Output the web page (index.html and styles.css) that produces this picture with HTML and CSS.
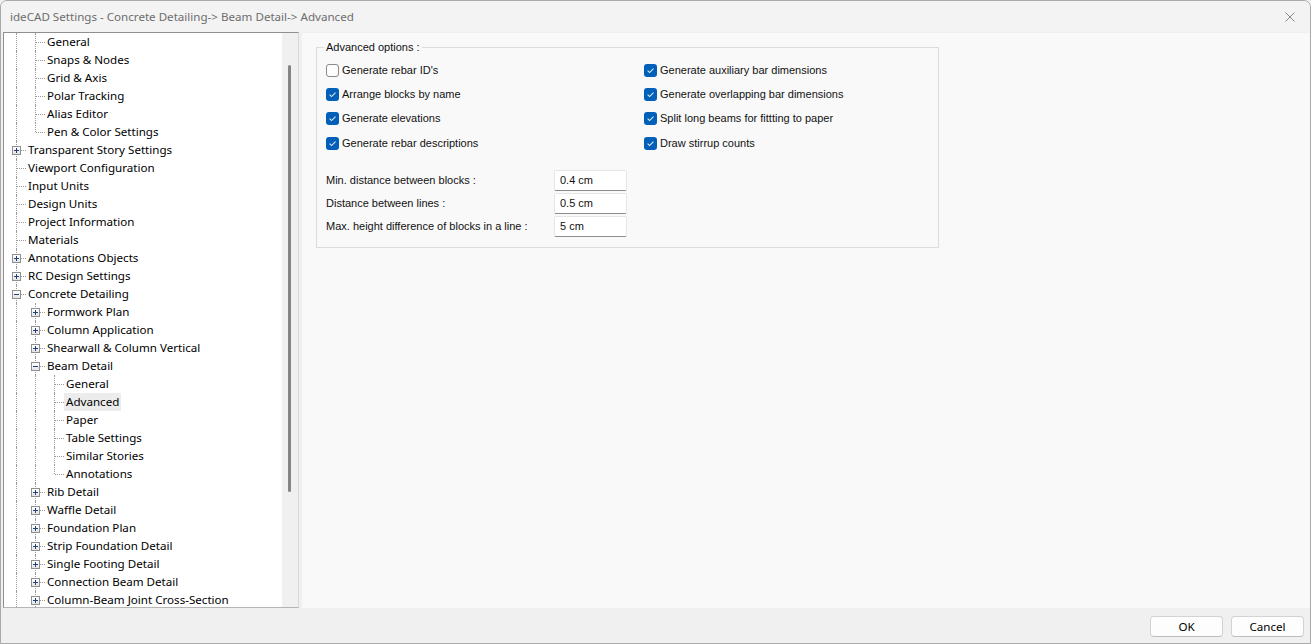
FILE: index.html
```html
<!DOCTYPE html>
<html lang="en">
<head>
    <meta charset="UTF-8">
    <title>ideCAD Settings</title>
    <link rel="stylesheet" href="styles.css">
</head>
<body>
    <div class="window">
        <!-- title bar -->
        <div class="titlebar">
            <span class="title">ideCAD Settings - Concrete Detailing-&gt; Beam Detail-&gt; Advanced</span>
            <svg class="close" width="10" height="10" viewBox="0 0 10 10">
                <path d="M0.5 0.5 L9.5 9.5 M9.5 0.5 L0.5 9.5" stroke="#8a8a8a" stroke-width="1" fill="none"/>
            </svg>
        </div>

        <div class="main">
            <!-- settings tree -->
            <div class="tree">
                <ul class="tree-list">
                    <li class="row"><i class="g line"></i><i class="g tee"></i><span class="label">General</span></li>
                    <li class="row"><i class="g line"></i><i class="g tee"></i><span class="label">Snaps &amp; Nodes</span></li>
                    <li class="row"><i class="g line"></i><i class="g tee"></i><span class="label">Grid &amp; Axis</span></li>
                    <li class="row"><i class="g line"></i><i class="g tee"></i><span class="label">Polar Tracking</span></li>
                    <li class="row"><i class="g line"></i><i class="g tee"></i><span class="label">Alias Editor</span></li>
                    <li class="row"><i class="g line"></i><i class="g corner"></i><span class="label">Pen &amp; Color Settings</span></li>
                    <li class="row"><i class="g tee"><b class="box plus"></b></i><span class="label">Transparent Story Settings</span></li>
                    <li class="row"><i class="g tee"></i><span class="label">Viewport Configuration</span></li>
                    <li class="row"><i class="g tee"></i><span class="label">Input Units</span></li>
                    <li class="row"><i class="g tee"></i><span class="label">Design Units</span></li>
                    <li class="row"><i class="g tee"></i><span class="label">Project Information</span></li>
                    <li class="row"><i class="g tee"></i><span class="label">Materials</span></li>
                    <li class="row"><i class="g tee"><b class="box plus"></b></i><span class="label">Annotations Objects</span></li>
                    <li class="row"><i class="g tee"><b class="box plus"></b></i><span class="label">RC Design Settings</span></li>
                    <li class="row"><i class="g tee"><b class="box"></b></i><span class="label">Concrete Detailing</span></li>
                    <li class="row"><i class="g line"></i><i class="g tee"><b class="box plus"></b></i><span class="label">Formwork Plan</span></li>
                    <li class="row"><i class="g line"></i><i class="g tee"><b class="box plus"></b></i><span class="label">Column Application</span></li>
                    <li class="row"><i class="g line"></i><i class="g tee"><b class="box plus"></b></i><span class="label">Shearwall &amp; Column Vertical</span></li>
                    <li class="row"><i class="g line"></i><i class="g tee"><b class="box"></b></i><span class="label">Beam Detail</span></li>
                    <li class="row"><i class="g line"></i><i class="g line"></i><i class="g tee"></i><span class="label">General</span></li>
                    <li class="row"><i class="g line"></i><i class="g line"></i><i class="g tee"></i><span class="label selected">Advanced</span></li>
                    <li class="row"><i class="g line"></i><i class="g line"></i><i class="g tee"></i><span class="label">Paper</span></li>
                    <li class="row"><i class="g line"></i><i class="g line"></i><i class="g tee"></i><span class="label">Table Settings</span></li>
                    <li class="row"><i class="g line"></i><i class="g line"></i><i class="g tee"></i><span class="label">Similar Stories</span></li>
                    <li class="row"><i class="g line"></i><i class="g line"></i><i class="g corner"></i><span class="label">Annotations</span></li>
                    <li class="row"><i class="g line"></i><i class="g tee"><b class="box plus"></b></i><span class="label">Rib Detail</span></li>
                    <li class="row"><i class="g line"></i><i class="g tee"><b class="box plus"></b></i><span class="label">Waffle Detail</span></li>
                    <li class="row"><i class="g line"></i><i class="g tee"><b class="box plus"></b></i><span class="label">Foundation Plan</span></li>
                    <li class="row"><i class="g line"></i><i class="g tee"><b class="box plus"></b></i><span class="label">Strip Foundation Detail</span></li>
                    <li class="row"><i class="g line"></i><i class="g tee"><b class="box plus"></b></i><span class="label">Single Footing Detail</span></li>
                    <li class="row"><i class="g line"></i><i class="g tee"><b class="box plus"></b></i><span class="label">Connection Beam Detail</span></li>
                    <li class="row"><i class="g line"></i><i class="g tee"><b class="box plus"></b></i><span class="label">Column-Beam Joint Cross-Section</span></li>
                </ul>
                <div class="scrollbar"><div class="thumb"></div></div>
            </div>

            <!-- options page -->
            <div class="page">
                <div class="group">
                    <span class="legend">Advanced options :</span>
                    <div class="checks">
                        <label class="check"><span class="cb"></span>Generate rebar ID's</label>
                        <label class="check"><span class="cb on"><svg viewBox="0 0 13 13"><path d="M3.6 6.7 L5.6 8.6 L9.5 4.6"/></svg></span>Generate auxiliary bar dimensions</label>
                        <label class="check"><span class="cb on"><svg viewBox="0 0 13 13"><path d="M3.6 6.7 L5.6 8.6 L9.5 4.6"/></svg></span>Arrange blocks by name</label>
                        <label class="check"><span class="cb on"><svg viewBox="0 0 13 13"><path d="M3.6 6.7 L5.6 8.6 L9.5 4.6"/></svg></span>Generate overlapping bar dimensions</label>
                        <label class="check"><span class="cb on"><svg viewBox="0 0 13 13"><path d="M3.6 6.7 L5.6 8.6 L9.5 4.6"/></svg></span>Generate elevations</label>
                        <label class="check"><span class="cb on"><svg viewBox="0 0 13 13"><path d="M3.6 6.7 L5.6 8.6 L9.5 4.6"/></svg></span>Split long beams for fittting to paper</label>
                        <label class="check"><span class="cb on"><svg viewBox="0 0 13 13"><path d="M3.6 6.7 L5.6 8.6 L9.5 4.6"/></svg></span>Generate rebar descriptions</label>
                        <label class="check"><span class="cb on"><svg viewBox="0 0 13 13"><path d="M3.6 6.7 L5.6 8.6 L9.5 4.6"/></svg></span>Draw stirrup counts</label>
                    </div>
                    <div class="fields">
                        <div class="field"><span class="field-label">Min. distance between blocks :</span><span class="input">0.4 cm</span></div>
                        <div class="field"><span class="field-label">Distance between lines :</span><span class="input">0.5 cm</span></div>
                        <div class="field"><span class="field-label">Max. height difference of blocks in a line :</span><span class="input">5 cm</span></div>
                    </div>
                </div>
            </div>
        </div>

        <!-- buttons -->
        <div class="footer">
            <button class="btn">OK</button>
            <button class="btn">Cancel</button>
        </div>
    </div>
</body>
</html>
```

FILE: styles.css
```css
* {
    margin: 0;
    padding: 0;
    box-sizing: border-box;
}
html, body {
    width: 1311px;
    height: 644px;
    overflow: hidden;
    background: #f0f0f0;
}
body {
    font-family: "Noto Sans", "Open Sans", sans-serif;
    font-size: 11.6px;
    color: #000;
}
ul {
    list-style: none;
}
.window {
    width: 1311px;
    height: 644px;
    border: 1px solid #a9a9a9;
    border-radius: 7px 7px 0 0;
    background: #f0f0f0;
    display: flex;
    flex-direction: column;
    overflow: hidden;
}
.titlebar {
    height: 31px;
    flex: none;
    display: flex;
    align-items: center;
    justify-content: space-between;
    padding: 0 10px 0 9px;
    background: #f3f3f3;
}
.title {
    color: #6d6d6d;
}
.close {
    margin-right: 5px;
}
.main {
    flex: 1;
    display: flex;
    gap: 3px;
    padding-left: 2px;
    min-height: 0;
}

/* tree */
.tree {
    width: 296px;
    flex: none;
    display: flex;
    background: #fff;
    border: 1px solid #8f8f8f;
    border-right-color: #d9d9d9;
    border-bottom-color: #b5b5b5;
}
.tree-list {
    flex: 1;
    padding-left: 3px;
    overflow: hidden;
}
.row {
    display: flex;
    align-items: center;
    height: 18px;
    white-space: nowrap;
}
.g {
    width: 19px;
    height: 18px;
    flex: none;
    position: relative;
}
.line::before,
.tee::before,
.corner::before {
    content: "";
    position: absolute;
    left: 9px;
    top: 0;
    bottom: 0;
    border-left: 1px dotted #9a9a9a;
}
.corner::before {
    bottom: 9px;
}
.tee::after,
.corner::after {
    content: "";
    position: absolute;
    left: 10px;
    top: 9px;
    width: 9px;
    border-top: 1px dotted #9a9a9a;
}
.box {
    position: absolute;
    left: 5px;
    top: 5px;
    width: 9px;
    height: 9px;
    border: 1px solid #8e8f8f;
    background: linear-gradient(#ffffff, #e4e4e4);
    z-index: 1;
}
.box::before {
    content: "";
    position: absolute;
    left: 1px;
    top: 3px;
    width: 5px;
    height: 1px;
    background: #23407a;
}
.box.plus::after {
    content: "";
    position: absolute;
    left: 3px;
    top: 1px;
    width: 1px;
    height: 5px;
    background: #23407a;
}
.label {
    padding: 0 2px 1px;
    line-height: 17px;
}
.label.selected {
    background: #ececec;
}
.scrollbar {
    width: 16px;
    flex: none;
    background: #f0f0f0;
    padding: 32px 0 0 6px;
}
.thumb {
    width: 3px;
    height: 427px;
    background: #858585;
    border-radius: 2px;
}

/* right page */
.page {
    flex: 1;
    background: #f9f9f9;
    border-top: 1px solid #f0f0f0;
    padding: 14px 0 0 14px;
    font-family: "Liberation Sans", Arial, sans-serif;
    font-size: 11px;
    color: #111;
}
.group {
    position: relative;
    width: 623px;
    height: 201px;
    border: 1px solid #dcdcdc;
    padding: 10px 9px 0 9px;
}
.legend {
    position: absolute;
    top: -9px;
    left: 7px;
    padding: 0 2px;
    background: #f9f9f9;
    line-height: 17px;
}
.checks {
    display: grid;
    grid-template-columns: 318px 1fr;
    grid-template-rows: 24px 24px 24px 25px;
}
.check {
    display: flex;
    align-items: center;
    gap: 3px;
    white-space: nowrap;
}
.check:nth-child(n+7) {
    padding-top: 1px;
}
.cb {
    width: 13px;
    height: 13px;
    flex: none;
    border: 1px solid #8a8a8a;
    border-radius: 3px;
    background: #fdfdfd;
}
.cb.on {
    border: none;
    background: #005fb8;
}
.cb svg {
    display: block;
    width: 13px;
    height: 13px;
    fill: none;
    stroke: #dfeaf6;
    stroke-width: 1.1;
}
.fields {
    margin-top: 15px;
    display: flex;
    flex-direction: column;
    gap: 2px;
}
.field {
    display: flex;
    align-items: center;
    height: 21px;
    white-space: nowrap;
}
.field-label {
    width: 228px;
    padding-bottom: 1px;
}
.input {
    width: 73px;
    height: 21px;
    padding-left: 5px;
    line-height: 19px;
    background: #fff;
    border: 1px solid #e6e6e6;
    border-bottom-color: #8d8d8d;
    border-radius: 2px;
}

/* footer */
.footer {
    height: 35px;
    flex: none;
    display: flex;
    justify-content: flex-end;
    align-items: flex-start;
    gap: 8px;
    padding: 8px 6px 0 0;
    background: #f0f0f0;
}
.btn {
    width: 73px;
    height: 21px;
    font-family: inherit;
    font-size: 11.6px;
    color: #000;
    background: #fdfdfd;
    border: 1px solid #d3d3d3;
    border-bottom-color: #bdbdbd;
    border-radius: 4px;
}
```
